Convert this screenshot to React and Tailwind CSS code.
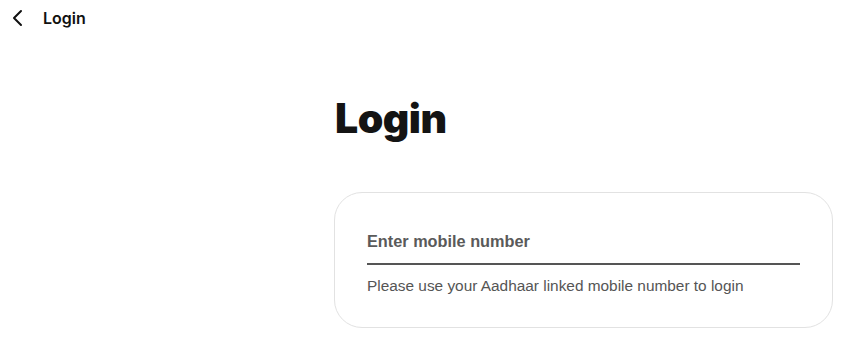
import React from "react";

export default function App() {
  return (
    <div className="w-[849px] h-[346px] bg-white overflow-hidden">
      <header className="flex items-center h-[36px] pl-[11px]">
        <svg width="14" height="18" viewBox="0 0 14 18" fill="none" className="mr-[18px]">
          <path d="M10 2 L3 9 L10 16" stroke="#111" strokeWidth="2" strokeLinecap="round" strokeLinejoin="round" />
        </svg>
        <span className="font-['Inter',sans-serif] text-[16px] font-semibold text-[#111]">Login</span>
      </header>
      <div className="flex">
        <div className="w-[334px] shrink-0" />
        <div className="flex flex-col">
          <h1 className="font-['Inter',sans-serif] text-[41px] leading-[48px] font-black tracking-[-0.5px] text-[#141414] mt-[58px] ml-[1px]">
            Login
          </h1>
          <div className="mt-[50px] w-[499px] h-[136px] border border-[#e2e2e2] rounded-[28px] px-[32px] pt-[38px]">
            <div className="font-['Liberation_Sans',Arial,sans-serif] text-[16.3px] font-bold text-[#5a5a5a] leading-[20px]">
              Enter mobile number
            </div>
            <div className="h-[2px] bg-[#555] mt-[12px]" />
            <div className="font-['Liberation_Sans',Arial,sans-serif] text-[15.4px] text-[#555] leading-[18px] mt-[12px]">
              Please use your Aadhaar linked mobile number to login
            </div>
          </div>
        </div>
      </div>
    </div>
  );
}
